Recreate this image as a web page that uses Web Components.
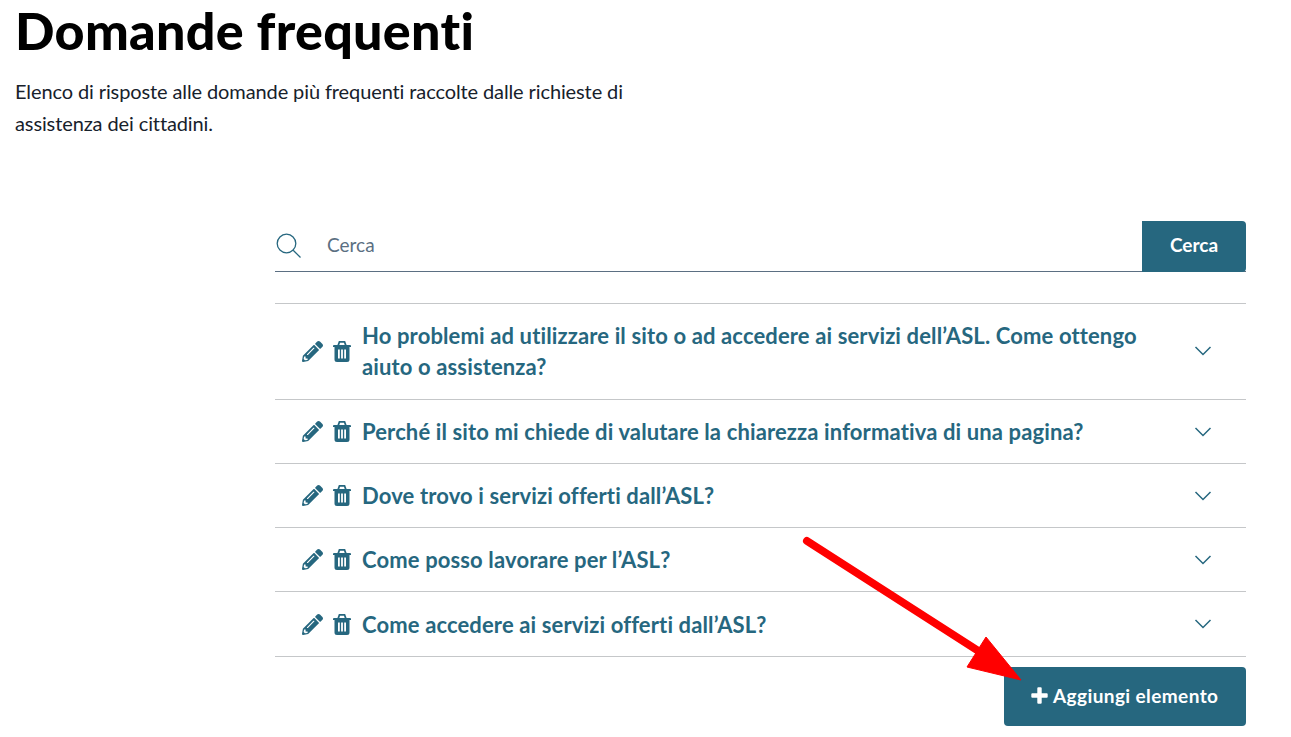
<!DOCTYPE html>
<html lang="it">
<head>
<meta charset="utf-8">
<title>Domande frequenti</title>
<style>
  html, body { margin: 0; height: 737px; overflow: hidden; background: #fff; }
  body { font-family: "Lato", "Liberation Sans", sans-serif; font-variant-ligatures: none; position: relative; }
</style>
</head>
<body>
<faq-page>
  <page-head slot="head" title="Domande frequenti">Elenco di risposte alle domande più frequenti raccolte dalle richieste di assistenza dei cittadini.</page-head>
  <search-bar slot="main"></search-bar>
  <faq-list slot="main">
    <faq-item>Ho problemi ad utilizzare il sito o ad accedere ai servizi dell’ASL. Come ottengo aiuto o assistenza?</faq-item>
    <faq-item>Perché il sito mi chiede di valutare la chiarezza informativa di una pagina?</faq-item>
    <faq-item>Dove trovo i servizi offerti dall’ASL?</faq-item>
    <faq-item>Come posso lavorare per l’ASL?</faq-item>
    <faq-item>Come accedere ai servizi offerti dall’ASL?</faq-item>
  </faq-list>
  <add-button slot="main">Aggiungi elemento</add-button>
</faq-page>
<red-arrow></red-arrow>
<script>
  const TEAL = '#26677f';

  class FaqPage extends HTMLElement {
    constructor() {
      super();
      this.attachShadow({ mode: 'open' }).innerHTML = `
        <style>
          :host { display: block; }
          .main { display: flex; flex-direction: column; margin: 0 45px 0 275px; padding-top: 82px; }
        </style>
        <slot name="head"></slot>
        <div class="main"><slot name="main"></slot></div>`;
    }
  }

  class PageHead extends HTMLElement {
    constructor() {
      super();
      this.attachShadow({ mode: 'open' }).innerHTML = `
        <style>
          :host { display: block; padding-left: 15px; color: #000; }
          h1 { margin: 0; font-size: 52px; line-height: 60px; font-weight: 900; letter-spacing: .3px; }
          p { margin: 15px 0 0; width: 625px; font-size: 20px; line-height: 32px; color: #17212b; letter-spacing: -.11px; }
        </style>
        <h1></h1>
        <p><slot></slot></p>`;
      this.shadowRoot.querySelector('h1').textContent = this.getAttribute('title');
    }
  }

  class SearchBar extends HTMLElement {
    constructor() {
      super();
      this.attachShadow({ mode: 'open' }).innerHTML = `
        <style>
          :host { display: flex; height: 51px; box-sizing: border-box; border-bottom: 1px solid #5b6f82; }
          svg { width: 26px; height: 26px; margin: 12px 25px 0 1px; flex: none; }
          .q { flex: 1; font-size: 19px; line-height: 48px; color: #5b6f82; }
          button { width: 104px; height: 51px; border: 0; border-radius: 0 4px 4px 0; padding: 0 0 5px; background: ${TEAL};
                   color: #fff; font: 700 19px "Lato", "Liberation Sans", sans-serif; }
        </style>
        <svg viewBox="0 0 26 26" fill="none" stroke="${TEAL}" stroke-width="1.3">
          <circle cx="10.5" cy="10.5" r="9.3"/><path d="M17.2 17.2 24.5 24.5"/>
        </svg>
        <div class="q">Cerca</div>
        <button>Cerca</button>`;
    }
  }

  class FaqList extends HTMLElement {
    constructor() {
      super();
      this.attachShadow({ mode: 'open' }).innerHTML = `
        <style>
          :host { display: block; margin-top: 31px; border-top: 1px solid #c5c7c9; }
        </style>
        <slot></slot>`;
    }
  }

  class FaqItem extends HTMLElement {
    constructor() {
      super();
      this.attachShadow({ mode: 'open' }).innerHTML = `
        <style>
          :host { display: flex; align-items: center; box-sizing: border-box; min-height: 64px; padding: 16px 34px 16px 27px;
                  border-bottom: 1px solid #c5c7c9; color: ${TEAL}; }
          :host(:first-child) { padding-bottom: 17px; }
          :host(:last-child) { min-height: 65px; }
          .pen { width: 21px; height: 21px; flex: none; }
          .bin { width: 18px; height: 21px; flex: none; margin-left: 10px; }
          .t { flex: 1; margin: 0 44px 0 11px; font-size: 22px; line-height: 31px; font-weight: 700; letter-spacing: .13px; }
          .chev { width: 18px; height: 10px; flex: none; }
        </style>
        <svg class="pen" viewBox="0 0 512 512" fill="currentColor"><path d="M497.9 142.1l-46.1 46.1c-4.700 4.700-12.300 4.700-17 0l-111-111c-4.700-4.700-4.700-12.300 0-17l46.100-46.100c18.700-18.700 49.100-18.700 67.900 0l60.100 60.100c18.800 18.700 18.800 49.100 0 67.900zM284.200 99.800L21.600 362.400.4 483.900c-2.900 16.400 11.400 30.600 27.800 27.800l121.500-21.300 262.600-262.600c4.700-4.700 4.700-12.300 0-17l-111-111c-4.800-4.700-12.400-4.700-17.100 0zM124.100 339.900c-5.500-5.500-5.500-14.300 0-19.800l154-154c5.500-5.500 14.300-5.500 19.800 0s5.500 14.300 0 19.800l-154 154c-5.500 5.500-14.300 5.500-19.800 0zM88 424h48v36.300l-64.500 11.300-31.100-31.100L51.700 376H88v48z"/></svg>
        <svg class="bin" viewBox="0 0 18 21" fill="currentColor">
          <path d="M1 4h16a1 1 0 0 1 1 1v1H0V5a1 1 0 0 1 1-1z"/>
          <path d="M5 5 6.500.8h5L13 5" fill="none" stroke="currentColor" stroke-width="1.800"/>
          <path fill-rule="evenodd" d="M1.500 5h15v13.500A2.500 2.500 0 0 1 14 21H4a2.500 2.500 0 0 1-2.500-2.500zM5 8.500v9h1.800v-9zM8.100 8.500v9h1.800v-9zM11.200 8.500v9H13v-9z"/>
        </svg>
        <div class="t"><slot></slot></div>
        <svg class="chev" viewBox="0 0 18 10" fill="none" stroke="${TEAL}" stroke-width="1.500"><path d="M1.500 1 9 8.500 16.500 1"/></svg>`;
    }
  }

  class AddButton extends HTMLElement {
    constructor() {
      super();
      this.attachShadow({ mode: 'open' }).innerHTML = `
        <style>
          :host { display: flex; align-items: center; gap: 5px; align-self: flex-end; box-sizing: border-box; width: 242px; height: 59px;
                  margin-top: 10px; padding: 0 0 2px 27px; border-radius: 4px; background: ${TEAL}; color: #fff;
                  font-size: 19px; font-weight: 700; letter-spacing: .4px; white-space: nowrap; }
          svg { width: 17px; height: 17px; flex: none; }
        </style>
        <svg viewBox="0 0 17 17" fill="#fff"><path d="M6.300 1.300a1 1 0 0 1 1-1h2.400a1 1 0 0 1 1 1v5h5a1 1 0 0 1 1 1v2.400a1 1 0 0 1-1 1h-5v5a1 1 0 0 1-1 1H7.300a1 1 0 0 1-1-1v-5h-5a1 1 0 0 1-1-1V7.300a1 1 0 0 1 1-1h5z"/></svg>
        <slot></slot>`;
    }
  }

  // annotation drawn over the page
  class RedArrow extends HTMLElement {
    constructor() {
      super();
      this.attachShadow({ mode: 'open' }).innerHTML = `
        <style>
          :host { position: absolute; left: 795px; top: 530px; width: 240px; height: 160px; }
          svg { display: block; }
        </style>
        <svg width="240" height="160" viewBox="0 0 240 160">
          <path d="M12 11 185 122" stroke="#f00" stroke-width="8" stroke-linecap="round"/>
          <path d="M226 150 172 137 191 107z" fill="#f00" stroke="#f00" stroke-width="1"/>
        </svg>`;
    }
  }

  customElements.define('faq-page', FaqPage);
  customElements.define('page-head', PageHead);
  customElements.define('search-bar', SearchBar);
  customElements.define('faq-list', FaqList);
  customElements.define('faq-item', FaqItem);
  customElements.define('add-button', AddButton);
  customElements.define('red-arrow', RedArrow);
</script>
</body>
</html>
